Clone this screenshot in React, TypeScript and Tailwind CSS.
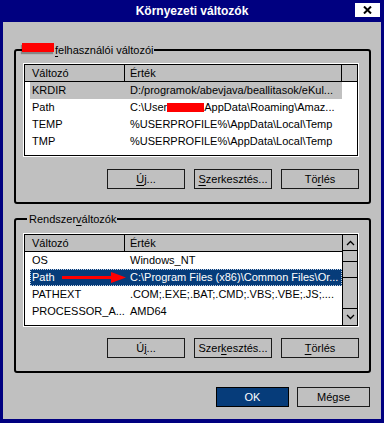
import type { ReactNode } from 'react';

const U = ({ children }: { children: ReactNode }) => (
  <span className="underline underline-offset-[2px]">{children}</span>
);

const Btn = ({ children, primary }: { children: ReactNode; primary?: boolean }) => (
  <div
    className={
      primary
        ? 'w-[73px] h-[20px] border border-black bg-[#063c7a] text-white flex items-center justify-center'
        : 'w-[78px] h-[20px] border border-[#1a1a1a] flex items-center justify-center'
    }
  >
    {children}
  </div>
);

type RowData = { name: string; value: ReactNode; state?: 'inactive' | 'selected'; arrow?: boolean };

const Row = ({ name, value, state, arrow }: RowData) => (
  <div
    className={
      'relative ml-[5px] w-[312px] h-[17px] leading-[17px] flex whitespace-nowrap ' +
      (state === 'inactive' ? 'bg-[#c0c0c0] ' : '') +
      (state === 'selected' ? 'bg-[#063c7a] text-white outline-1 outline-dotted outline-[#c8d4e4] -outline-offset-1 ' : '')
    }
  >
    <div className="w-[95px] pl-[2px] overflow-hidden">{name}</div>
    <div className="flex-1 pl-[5px] overflow-hidden">{value}</div>
    {arrow && (
      <svg className="absolute left-[32px] top-[0px]" width="65" height="17" viewBox="0 0 65 17">
        <rect x="0" y="7" width="52" height="3" fill="#ff0000" />
        <polygon points="49,3 64,8.5 49,14" fill="#ff0000" />
      </svg>
    )}
  </div>
);

const Header = ({ extra }: { extra?: boolean }) => (
  <div className="h-[17px] flex border-b border-black bg-[#c0c0c0] leading-[16px]">
    <div className="w-[100px] border-r border-black pl-[7px]">Változó</div>
    <div className={extra ? 'w-[217px] border-r border-black pl-[5px]' : 'flex-1 pl-[5px]'}>Érték</div>
    {extra && <div className="flex-1" />}
  </div>
);

const Chevron = ({ up }: { up?: boolean }) => (
  <svg width="9" height="6" viewBox="0 0 9 6">
    <polyline
      points={up ? '1,5 4.5,1.5 8,5' : '1,1 4.5,4.5 8,1'}
      fill="none"
      stroke="#000"
      strokeWidth="1.3"
    />
  </svg>
);

const Scrollbar = () => (
  <div className="w-[15px] border-l border-black bg-[#c0c0c0] flex flex-col">
    <div className="h-[16px] border-b border-black flex items-center justify-center">
      <Chevron up />
    </div>
    <div className="h-[11px] border-b border-black" />
    <div className="h-[16px] border-b border-black" />
    <div className="h-[31px] border-b border-black" />
    <div className="h-[16px] flex items-center justify-center">
      <Chevron />
    </div>
  </div>
);

const List = ({ rows, scroll }: { rows: RowData[]; scroll?: boolean }) => (
  <div className="w-[336px] h-[94px] border border-white">
    <div className="h-full border border-black bg-white flex">
      <div className="flex-1 flex flex-col">
        <Header extra={!scroll} />
        {rows.map((r) => (
          <Row key={r.name} {...r} />
        ))}
      </div>
      {scroll && <Scrollbar />}
    </div>
  </div>
);

const Redact = ({ w }: { w: string }) => (
  <span className={`inline-block ${w} h-[9px] bg-[#ff0000] align-middle shadow-[-1px_2px_1px_rgba(0,0,0,0.3)]`} />
);

const userRows: RowData[] = [
  { name: 'KRDIR', value: 'D:/programok/abevjava/beallitasok/eKul...', state: 'inactive' },
  {
    name: 'Path',
    value: (
      <>
        C:\User
        <span className="inline-block w-[37px] h-[9px] bg-[#ff0000] align-middle -mt-[2px]" />
        AppData\Roaming\Amaz...
      </>
    ),
  },
  { name: 'TEMP', value: '%USERPROFILE%\\AppData\\Local\\Temp' },
  { name: 'TMP', value: '%USERPROFILE%\\AppData\\Local\\Temp' },
];

const sysRows: RowData[] = [
  { name: 'OS', value: 'Windows_NT' },
  { name: 'Path', value: 'C:\\Program Files (x86)\\Common Files\\Or...', state: 'selected', arrow: true },
  { name: 'PATHEXT', value: '.COM;.EXE;.BAT;.CMD;.VBS;.VBE;.JS;....' },
  { name: 'PROCESSOR_A...', value: 'AMD64' },
];

export default function App() {
  return (
    <div className="w-[384px] h-[423px] bg-[#000080] flex flex-col px-[3px] pb-[4px] font-['Liberation_Sans',Arial,sans-serif] text-[11px] text-black">
      {/* title bar */}
      <div className="h-[22px] flex items-center shrink-0">
        <div className="w-[26px]" />
        <div className="flex-1 text-center text-white font-bold text-[12px] leading-[22px]">Környezeti változók</div>
        <div className="w-[25px] h-[14px] bg-white mr-[1px] -mt-[2px] flex items-center justify-center">
          <svg width="9" height="8" viewBox="0 0 9 8">
            <path d="M1 0.5 L8 7.5 M8 0.5 L1 7.5" stroke="#000" strokeWidth="2" />
          </svg>
        </div>
      </div>

      {/* body */}
      <div className="flex-1 bg-[#c0c0c0] pl-[11px] pt-[21px] flex flex-col">
        <fieldset className="w-[356px] border-2 border-black rounded-[3px] pl-[7px] pr-[10px] pb-[13px]">
          <legend className="ml-[4px] pl-[2px] pr-[1px] leading-[14px] whitespace-nowrap">
            <span className="inline-block w-[32px] h-[9px] bg-[#ff0000] align-top -ml-[7px] mr-px shadow-[-1px_2px_1px_rgba(0,0,0,0.3)]" />
            <U>f</U>elhasználói változói
          </legend>
          <div className="mt-[6px]">
            <List rows={userRows} />
          </div>
          <div className="mt-[12px] flex justify-end gap-[9px]">
            <Btn>
              <U>Ú</U>j...
            </Btn>
            <Btn>
              <U>S</U>zerkesztés...
            </Btn>
            <Btn>
              Tö<U>r</U>lés
            </Btn>
          </div>
        </fieldset>

        <fieldset className="mt-[8px] w-[356px] border-2 border-black rounded-[3px] pl-[7px] pr-[10px] pb-[13px]">
          <legend className="ml-[4px] pl-[2px] pr-[1px] leading-[14px] whitespace-nowrap">
            Rendszer<U>v</U>áltozók
          </legend>
          <div className="mt-[7px]">
            <List rows={sysRows} scroll />
          </div>
          <div className="mt-[11px] flex justify-end gap-[9px]">
            <Btn>
              Ú<U>j</U>...
            </Btn>
            <Btn>
              Szer<U>k</U>esztés...
            </Btn>
            <Btn>
              <U>T</U>örlés
            </Btn>
          </div>
        </fieldset>

        <div className="mt-[14px] w-[356px] flex justify-end gap-[8px]">
          <Btn primary>OK</Btn>
          <div className="w-[73px] h-[20px] border border-[#1a1a1a] flex items-center justify-center">Mégse</div>
        </div>
      </div>
    </div>
  );
}
